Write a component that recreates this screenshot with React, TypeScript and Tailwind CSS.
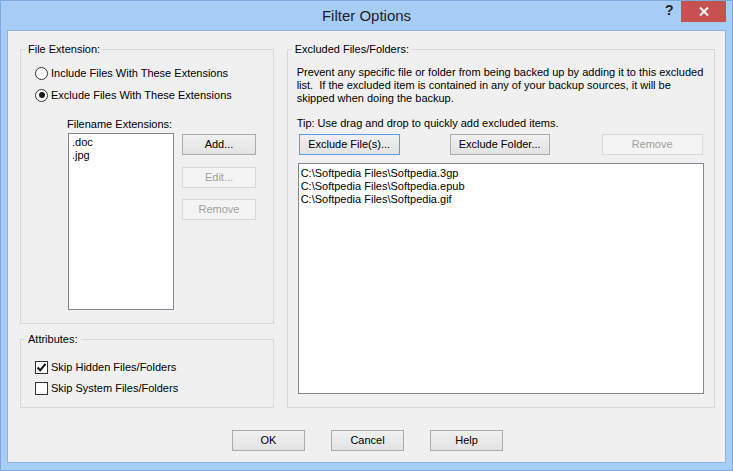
import React from "react";

const font = { fontFamily: '"Liberation Sans", Arial, sans-serif' };

function WinButton({
  label,
  width,
  disabled,
  focused,
  className = "",
}: {
  label: string;
  width: string;
  disabled?: boolean;
  focused?: boolean;
  className?: string;
}) {
  const base =
    "h-[21px] flex items-center justify-center text-[11px] leading-none border shrink-0";
  const look = disabled
    ? "border-[#d9d9d9] bg-[#f4f4f4] text-[#a0a0a0]"
    : focused
      ? "border-[#5a9fe3] bg-gradient-to-b from-[#f0f0f0] to-[#e3e3e3] text-black"
      : "border-[#acacac] bg-gradient-to-b from-[#f0f0f0] to-[#e3e3e3] text-black";
  return <div className={`${base} ${look} ${width} ${className}`}>{label}</div>;
}

function Radio({ checked, label }: { checked?: boolean; label: string }) {
  return (
    <div className="flex items-center h-[16px] gap-[3px]">
      <span className="w-[13px] h-[13px] rounded-full border border-[#333] bg-white flex items-center justify-center">
        {checked && <span className="w-[6px] h-[6px] rounded-full bg-[#1a1a1a]" />}
      </span>
      <span className="text-[11px] text-black">{label}</span>
    </div>
  );
}

function Check({ checked, label }: { checked?: boolean; label: string }) {
  return (
    <div className="flex items-center h-[16px] gap-[3px]">
      <span className="w-[13px] h-[13px] border border-[#333] bg-white flex items-center justify-center">
        {checked && (
          <svg width="11" height="11" viewBox="0 0 11 11">
            <path d="M1.5 5.5 L4.2 8.3 L9.5 1.8" fill="none" stroke="#111" strokeWidth="2" />
          </svg>
        )}
      </span>
      <span className="text-[11px] text-black">{label}</span>
    </div>
  );
}

export default function App() {
  return (
    <div
      className="w-[733px] h-[471px] bg-[#a6cdf5] border border-[#7fa9dc] relative overflow-hidden"
      style={font}
    >
      {/* title bar */}
      <div className="h-[29px] flex items-center justify-center">
        <span className="text-[15px] text-[#1f1f1f] pt-[1px]">Filter Options</span>
      </div>
      <div className="absolute top-[2px] left-[664px] text-[14px] font-bold text-[#222] leading-none">?</div>
      <div className="absolute top-0 left-[680px] w-[45px] h-[21px] bg-[#c75050] flex items-center justify-center">
        <svg width="10" height="9" viewBox="0 0 10 9">
          <path d="M1 0.5 L9 8.5 M9 0.5 L1 8.5" stroke="#fff" strokeWidth="2" />
        </svg>
      </div>

      {/* client */}
      <div className="ml-[6px] w-[719px] h-[433px] border border-[#8db3de] bg-[#f0f0f0] pt-[11px] pl-[12px] pr-[10px]">
        <div className="flex gap-[13px]">
          {/* left column */}
          <div className="flex flex-col w-[254px]">
            <fieldset className="border border-[#d9d9d9] h-[282px]">
              <legend className="ml-[4px] px-[3px] text-[11px] leading-[14px] text-black">File Extension:</legend>
              <div className="pl-[14px] mt-[9px] flex flex-col gap-[6px]">
                <Radio label="Include Files With These Extensions" />
                <Radio checked label="Exclude Files With These Extensions" />
              </div>
              <div className="ml-[46px] mt-[14px] text-[11px] leading-[14px] text-black">Filename Extensions:</div>
              <div className="flex ml-[47px] mt-[2px]">
                <div className="w-[106px] h-[177px] border border-[#828790] bg-white px-[3px] pt-[2px] text-[11px] leading-[13px] text-black">
                  <div>.doc</div>
                  <div>.jpg</div>
                </div>
                <div className="flex flex-col ml-[8px] mt-[1px]">
                  <WinButton label="Add..." width="w-[74px]" />
                  <WinButton label="Edit..." width="w-[74px]" disabled className="mt-[12px]" />
                  <WinButton label="Remove" width="w-[74px]" disabled className="mt-[11px]" />
                </div>
              </div>
            </fieldset>
            <fieldset className="border border-[#d9d9d9] h-[76px] mt-[8px]">
              <legend className="ml-[4px] px-[3px] text-[11px] leading-[14px] text-black">Attributes:</legend>
              <div className="pl-[14px] mt-[13px] flex flex-col gap-[5px]">
                <Check checked label="Skip Hidden Files/Folders" />
                <Check label="Skip System Files/Folders" />
              </div>
            </fieldset>
          </div>

          {/* right column */}
          <fieldset className="border border-[#d9d9d9] w-[429px] h-[366px] pl-[9px]">
            <legend className="ml-[-5px] px-[3px] text-[11px] leading-[14px] text-black">Excluded Files/Folders:</legend>
            <p className="mt-[10px] text-[11px] leading-[13px] text-black">
              Prevent any specific file or folder from being backed up by adding it to this excluded
              <br />
              list.&nbsp; If the excluded item is contained in any of your backup sources, it will be
              <br />
              skipped when doing the backup.
            </p>
            <p className="mt-[12px] text-[11px] leading-[13px] text-black">
              Tip: Use drag and drop to quickly add excluded items.
            </p>
            <div className="flex mt-[4px]">
              <WinButton label="Exclude File(s)..." width="w-[101px]" focused className="ml-[2px]" />
              <WinButton label="Exclude Folder..." width="w-[100px]" className="ml-[50px]" />
              <WinButton label="Remove" width="w-[101px]" disabled className="ml-[52px]" />
            </div>
            <div className="mt-[8px] ml-[1px] w-[406px] h-[231px] border border-[#828790] bg-white px-[2px] pt-[3px] text-[11px] leading-[13px] text-black">
              <div>C:\Softpedia Files\Softpedia.3gp</div>
              <div>C:\Softpedia Files\Softpedia.epub</div>
              <div>C:\Softpedia Files\Softpedia.gif</div>
            </div>
          </fieldset>
        </div>

        {/* dialog buttons */}
        <div className="flex justify-center gap-[26px] mt-[22px]">
          <WinButton label="OK" width="w-[73px]" />
          <WinButton label="Cancel" width="w-[73px]" />
          <WinButton label="Help" width="w-[73px]" />
        </div>
      </div>
    </div>
  );
}
